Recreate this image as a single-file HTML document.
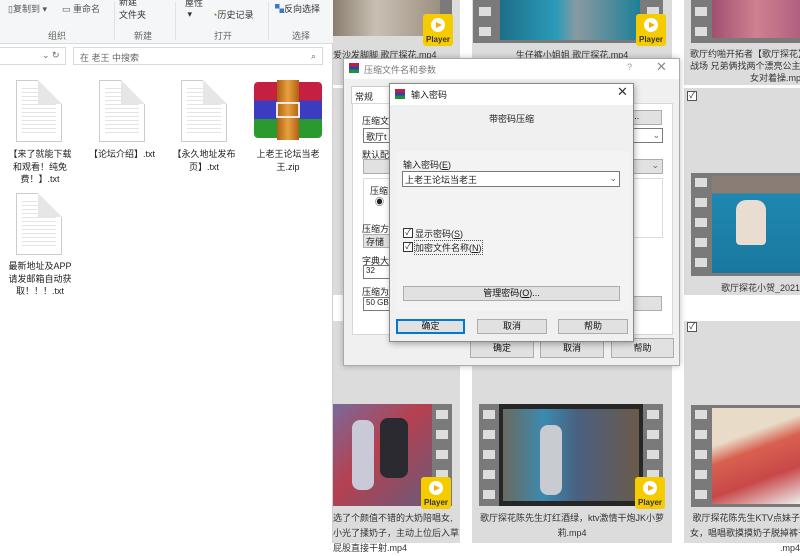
<!DOCTYPE html>
<html><head><meta charset="utf-8"><style>
*{margin:0;padding:0;box-sizing:border-box}
body{width:800px;height:543px;overflow:hidden;position:relative;background:#fff;font-family:"Liberation Sans","Noto Sans CJK SC",sans-serif;font-size:9px;color:#222}
.a{position:absolute}
.tile{position:absolute;background:#dcdcdc}
.film{position:absolute;background:#7a7a7a}
.film i{position:absolute;width:12px;height:9px;background:#ddd}
.img{position:absolute}
.pl{position:absolute;width:30px;height:32px;background:#f5cc00;border-radius:3px}
.pl b{position:absolute;left:8px;top:4px;width:14px;height:14px;border-radius:50%;background:#fff}
.pl b:after{content:"";position:absolute;left:5px;top:3.5px;border-left:6px solid #f0b000;border-top:3.5px solid transparent;border-bottom:3.5px solid transparent}
.pl s{position:absolute;left:0;right:0;bottom:2px;text-align:center;text-decoration:none;font-size:8px;font-weight:bold;color:#333}
.cap{position:absolute;text-align:center;font-size:9px;color:#333;line-height:14px;white-space:nowrap;overflow:hidden}
.cb{position:absolute;width:10px;height:10px;border:1px solid #555;background:#fff;font-size:8px;line-height:8px;text-align:center}
.doc{position:absolute;width:46px;height:62px;background:#fff;border:1px solid #ccc;background-image:repeating-linear-gradient(#fff 0 3px,#e4e4e4 3px 4px);background-clip:content-box;padding:6px 5px}
.doc:after{content:"";position:absolute;right:-1px;top:-1px;border-left:12px solid #e6e6e6;border-bottom:12px solid #e6e6e6;border-top:12px solid #fff;border-right:12px solid #fff;width:0;height:0}
.fl{position:absolute;width:80px;text-align:center;font-size:9px;line-height:12.5px;color:#222}
.btn{position:absolute;background:#e1e1e1;border:1px solid #adadad;text-align:center;font-size:9px;color:#111}
</style></head><body>

<div class="a" style="left:333px;top:0;width:467px;height:543px;background:#fff"></div>
<div class="tile" style="left:333px;top:0;width:127px;height:85px"></div>
<div class="tile" style="left:472px;top:0;width:200px;height:85px"></div>
<div class="tile" style="left:684px;top:0;width:116px;height:85px"></div>
<div class="tile" style="left:333px;top:88px;width:127px;height:207px"></div>
<div class="tile" style="left:472px;top:88px;width:200px;height:207px"></div>
<div class="tile" style="left:684px;top:88px;width:116px;height:207px"></div>
<div class="tile" style="left:333px;top:321px;width:127px;height:222px"></div>
<div class="tile" style="left:472px;top:321px;width:200px;height:222px"></div>
<div class="tile" style="left:684px;top:321px;width:116px;height:222px"></div>

<div class="img" style="left:333px;top:0;width:108px;height:36px;background:linear-gradient(90deg,#8a7e6e,#c9c0b4 40%,#9b8f80)"></div>
<div class="film" style="left:440px;top:0;width:12px;height:42px"></div>
<div class="pl" style="left:423px;top:14px"><b></b><s>Player</s></div>
<div class="cap" style="left:333px;top:48px;width:127px;text-align:left">爱沙发脚脚 歌厅探花.mp4</div>
<div class="film" style="left:473px;top:0;width:190px;height:43px"><i style="left:6px;top:7px"></i><i style="left:6px;top:27px"></i><i style="left:174px;top:7px"></i></div>
<div class="img" style="left:500px;top:0;width:140px;height:40px;background:linear-gradient(90deg,#1d6f8a,#2a9bb8 40%,#8a9aa0 55%,#1e7f99)"></div>
<div class="pl" style="left:636px;top:14px"><b></b><s>Player</s></div>
<div class="cap" style="left:472px;top:48px;width:200px">生仔裤小姐姐 歌厅探花.mp4</div>
<div class="film" style="left:691px;top:0;width:109px;height:43px"><i style="left:4px;top:7px"></i><i style="left:4px;top:27px"></i></div>
<div class="img" style="left:712px;top:0;width:88px;height:38px;background:linear-gradient(90deg,#a05070,#d08090,#b06080)"></div>
<div class="cap" style="left:690px;top:48px;width:110px;text-align:left;line-height:12px">歌厅约啪开拓者【歌厅探花】<br>战场 兄弟俩找两个漂亮公主<br><span style="padding-left:60px">女对着操.mp4</span></div>
<div class="cb" style="left:687px;top:91px">✓</div>

<div class="film" style="left:691px;top:173px;width:109px;height:103px"><i style="left:4px;top:5px"></i><i style="left:4px;top:25px"></i><i style="left:4px;top:45px"></i><i style="left:4px;top:65px"></i><i style="left:4px;top:85px"></i></div>
<div class="img" style="left:712px;top:176px;width:88px;height:97px;background:linear-gradient(180deg,#8a7d75 0 18%,#1f88b0 18%,#1a78a0)"></div>
<div class="a" style="left:736px;top:200px;width:30px;height:45px;background:#e8ddd0;border-radius:10px 10px 4px 4px"></div>
<div class="cap" style="left:700px;top:281px;width:100px;text-align:right">歌厅探花小贺_2021</div>
<div class="cb" style="left:687px;top:322px">✓</div>

<div class="img" style="left:333px;top:404px;width:99px;height:102px;background:linear-gradient(135deg,#7a6a9a,#b54050 45%,#6a5a7a)"></div>
<div class="a" style="left:352px;top:420px;width:22px;height:70px;background:#c9c9d8;border-radius:8px"></div>
<div class="a" style="left:380px;top:418px;width:28px;height:60px;background:#2a2a30;border-radius:8px"></div>
<div class="film" style="left:432px;top:404px;width:20px;height:102px"><i style="left:4px;top:6px"></i><i style="left:4px;top:26px"></i><i style="left:4px;top:46px"></i><i style="left:4px;top:66px"></i></div>
<div class="pl" style="left:421px;top:477px"><b></b><s>Player</s></div>
<div class="cap" style="left:333px;top:511px;width:127px;text-align:left;line-height:15px">选了个颜值不错的大奶陪唱女,<br>小光了揉奶子，主动上位后入草<br>屁股直接干射.mp4</div>

<div class="film" style="left:479px;top:404px;width:184px;height:102px"><i style="left:4px;top:6px"></i><i style="left:4px;top:26px"></i><i style="left:4px;top:46px"></i><i style="left:4px;top:66px"></i><i style="left:4px;top:86px"></i><i style="left:168px;top:6px"></i><i style="left:168px;top:26px"></i><i style="left:168px;top:46px"></i><i style="left:168px;top:66px"></i></div>
<div class="img" style="left:499px;top:404px;width:144px;height:102px;background:#262626"></div>
<div class="img" style="left:503px;top:409px;width:136px;height:92px;background:linear-gradient(90deg,#6a6a60,#3b8ab0 30%,#4a6080 55%,#6b5a4a)"></div>
<div class="a" style="left:540px;top:425px;width:22px;height:70px;background:#c8ccd0;border-radius:8px"></div>
<div class="pl" style="left:635px;top:477px"><b></b><s>Player</s></div>
<div class="cap" style="left:472px;top:511px;width:200px;line-height:15px">歌厅探花陈先生灯红酒绿，ktv激情干炮JK小萝<br>莉.mp4</div>

<div class="film" style="left:691px;top:405px;width:109px;height:102px"><i style="left:4px;top:5px"></i><i style="left:4px;top:25px"></i><i style="left:4px;top:45px"></i><i style="left:4px;top:65px"></i><i style="left:4px;top:85px"></i></div>
<div class="img" style="left:712px;top:408px;width:88px;height:96px;background:linear-gradient(160deg,#e8dcc8 0 30%,#d86050 45%,#c84848 70%,#eee)"></div>
<div class="cap" style="left:690px;top:511px;width:110px;text-align:right;line-height:15px">歌厅探花陈先生KTV点妹子<br>女，唱唱歌摸摸奶子脱掉裤子<br>.mp4</div>

<div class="a" style="left:0;top:0;width:333px;height:543px;background:#fff;border-right:1px solid #d0d0d0"></div>
<div class="a" style="left:0;top:0;width:333px;height:44px;background:#f5f6f7;border-bottom:1px solid #dadbdc"></div>
<div class="a" style="left:8px;top:2px;font-size:9px;color:#555">▯复制到 ▾ &nbsp;&nbsp;&nbsp;&nbsp;&nbsp;▭ 重命名</div>
<div class="a" style="left:119px;top:-4px;font-size:9px;color:#333;line-height:13px">新建<br>文件夹</div>
<div class="a" style="left:185px;top:-4px;font-size:9px;color:#333">屋性<br>&nbsp;▾</div>
<div class="a" style="left:212px;top:8px;font-size:9px;color:#333"><span style="color:#4a8a30">◔</span>历史记录</div>
<div class="a" style="left:275px;top:2px;font-size:9px;color:#333"><span style="color:#3b78c8">▚</span>反向选择</div>
<div class="a" style="left:48px;top:29px;font-size:9px;color:#666">组织</div>
<div class="a" style="left:134px;top:29px;font-size:9px;color:#666">新建</div>
<div class="a" style="left:214px;top:29px;font-size:9px;color:#666">打开</div>
<div class="a" style="left:292px;top:29px;font-size:9px;color:#666">选择</div>
<div class="a" style="left:114px;top:2px;width:1px;height:38px;background:#e2e2e2"></div>
<div class="a" style="left:175px;top:2px;width:1px;height:38px;background:#e2e2e2"></div>
<div class="a" style="left:268px;top:2px;width:1px;height:38px;background:#e2e2e2"></div>
<div class="a" style="left:0;top:47px;width:66px;height:18px;border:1px solid #d9d9d9;border-left:none"></div>
<div class="a" style="left:42px;top:50px;color:#666">⌄ ↻</div>
<div class="a" style="left:73px;top:47px;width:250px;height:18px;border:1px solid #d9d9d9;color:#666;padding:3px 6px">在 老王 中搜索<span style="float:right">⌕</span></div>

<div class="doc" style="left:16px;top:80px"></div>
<div class="doc" style="left:99px;top:80px"></div>
<div class="doc" style="left:181px;top:80px"></div>
<div class="a" style="left:254px;top:82px;width:68px;height:56px;background:linear-gradient(#c62040 0 33%,#3c3cc0 33% 66%,#2a9a30 66%);border-radius:4px"></div>
<div class="a" style="left:277px;top:80px;width:22px;height:60px;background:linear-gradient(90deg,#b06010,#e8a040,#b06010)"></div>
<div class="a" style="left:276px;top:102px;width:24px;height:16px;border:2px solid #e8e8e8"></div>
<div class="fl" style="left:0;top:148px">【来了就能下载<br>和观看！纯免<br>费！】.txt</div>
<div class="fl" style="left:82px;top:148px">【论坛介绍】.txt</div>
<div class="fl" style="left:164px;top:148px">【永久地址发布<br>页】.txt</div>
<div class="fl" style="left:248px;top:148px">上老王论坛当老<br>王.zip</div>
<div class="doc" style="left:16px;top:193px"></div>
<div class="fl" style="left:0;top:260px">最新地址及APP<br>请发邮箱自动获<br>取！！！.txt</div>

<div class="a" style="left:343px;top:58px;width:337px;height:308px;background:#f0f0f0;border:1px solid #aaa;box-shadow:0 0 6px rgba(0,0,0,.25)"></div>
<div class="a" style="left:344px;top:59px;width:335px;height:20px;background:#fff"></div>
<div class="a" style="left:349px;top:63px;width:10px;height:10px;background:linear-gradient(#c02040 0 33%,#3040b0 33% 66%,#20903a 66%)"></div>
<div class="a" style="left:364px;top:63px;color:#777">压缩文件名和参数</div>
<div class="a" style="left:627px;top:62px;color:#999">?</div>
<div class="a" style="left:656px;top:59px;color:#888;font-size:13px">✕</div>
<div class="a" style="left:351px;top:86px;width:40px;height:18px;background:#fff;border:1px solid #ccc;border-bottom:none"></div>
<div class="a" style="left:355px;top:90px">常规</div>
<div class="a" style="left:352px;top:103px;width:321px;height:232px;background:#fff;border:1px solid #d8d8d8"></div>
<div class="a" style="left:362px;top:115px;line-height:12px">压缩文</div>
<div class="a" style="left:363px;top:128px;width:300px;height:15px;border:1px solid #7a7a7a;background:#fff;padding:1px 2px">歌厅t<span style="float:right;color:#666">⌄</span></div>
<div class="btn" style="left:600px;top:110px;width:62px;height:15px">B)...</div>
<div class="a" style="left:362px;top:148px">默认配</div>
<div class="a" style="left:363px;top:159px;width:300px;height:15px;border:1px solid #adadad;background:#e1e1e1;text-align:right;padding-right:3px;color:#666">⌄</div>
<div class="a" style="left:363px;top:178px;width:300px;height:60px;border:1px solid #dcdcdc"></div>
<div class="a" style="left:370px;top:184px">压缩</div>
<div class="a" style="left:375px;top:195px">◉</div>
<div class="a" style="left:362px;top:222px">压缩方</div>
<div class="a" style="left:363px;top:234px;width:30px;height:14px;background:#e1e1e1;border:1px solid #adadad;padding-left:2px">存储</div>
<div class="a" style="left:362px;top:254px">字典大</div>
<div class="a" style="left:363px;top:265px;width:30px;height:14px;background:#fff;border:1px solid #7a7a7a;padding-left:2px;font-size:8px">32</div>
<div class="a" style="left:362px;top:285px">压缩为</div>
<div class="a" style="left:363px;top:297px;width:30px;height:14px;background:#fff;border:1px solid #7a7a7a;padding-left:2px;font-size:8px">50 GB</div>
<div class="btn" style="left:600px;top:296px;width:62px;height:15px"></div>
<div class="btn" style="left:470px;top:338px;width:64px;height:20px;line-height:18px">确定</div>
<div class="btn" style="left:540px;top:338px;width:64px;height:20px;line-height:18px">取消</div>
<div class="btn" style="left:611px;top:338px;width:63px;height:20px;line-height:18px">帮助</div>

<div class="a" style="left:389px;top:83px;width:245px;height:259px;background:#f0f0f0;border:1px solid #888;box-shadow:1px 2px 6px rgba(0,0,0,.3)"></div>
<div class="a" style="left:390px;top:84px;width:243px;height:21px;background:#fff"></div>
<div class="a" style="left:395px;top:89px;width:10px;height:10px;background:linear-gradient(#c02040 0 33%,#3040b0 33% 66%,#20903a 66%)"></div>
<div class="a" style="left:411px;top:88px;color:#222">输入密码</div>
<div class="a" style="left:617px;top:84px;color:#333;font-size:13px">✕</div>
<div class="a" style="left:389px;top:112px;width:245px;text-align:center">带密码压缩</div>
<div class="a" style="left:396px;top:151px;width:234px;height:160px;background:#f3f3f3;border-radius:2px"></div>
<div class="a" style="left:403px;top:158px">输入密码(<u>E</u>)</div>
<div class="a" style="left:402px;top:171px;width:218px;height:16px;border:1px solid #7a7a7a;background:#fff;padding:1px 2px">上老王论坛当老王<span style="float:right;color:#666">⌄</span></div>
<div class="cb" style="left:403px;top:228px;border-color:#333">✓</div>
<div class="a" style="left:415px;top:227px">显示密码(<u>S</u>)</div>
<div class="cb" style="left:403px;top:242px;border-color:#333">✓</div>
<div class="a" style="left:415px;top:241px;outline:1px dotted #555">加密文件名称(<u>N</u>)</div>
<div class="btn" style="left:403px;top:286px;width:217px;height:15px;line-height:13px">管理密码(<u>O</u>)...</div>
<div class="btn" style="left:396px;top:319px;width:69px;height:15px;border:2px solid #0078d7;line-height:11px">确定</div>
<div class="btn" style="left:477px;top:319px;width:70px;height:15px;line-height:13px">取消</div>
<div class="btn" style="left:558px;top:319px;width:70px;height:15px;line-height:13px">帮助</div>
</body></html>
